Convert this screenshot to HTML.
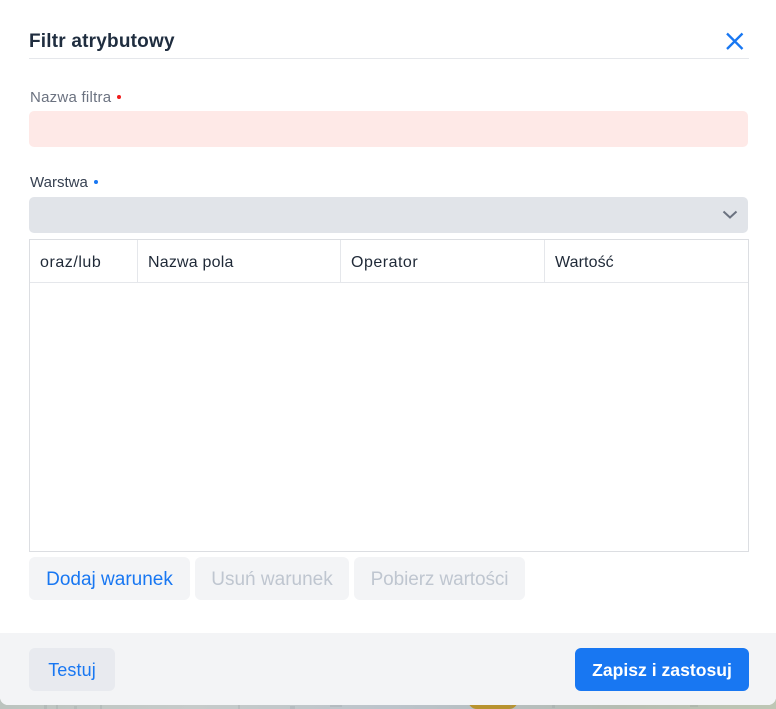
<!DOCTYPE html>
<html lang="pl">
<head>
<meta charset="utf-8">
<title>Filtr atrybutowy</title>
<style>
html,body{margin:0;padding:0;width:776px;height:709px;overflow:hidden;background:#b9c0bd;font-family:"Liberation Sans",sans-serif;}
#map{position:absolute;left:0;top:700px;width:776px;height:9px;background:linear-gradient(90deg,#bcc4bf 0,#c6cbca 25%,#bcc4cb 50%,#b7bfc2 62%,#b6bdb2 80%,#bec7b5 100%);}
#blob{position:absolute;left:468px;top:700px;width:50px;height:9px;background:#b8932f;border-radius:0 0 20px 20px;}
#marks{position:absolute;left:0;top:705px;}
#dlg{position:absolute;left:0;top:0;width:776px;height:705px;background:#fff;border-radius:0 0 8px 8px;overflow:hidden;}
.a{position:absolute;white-space:nowrap;}
.box{position:absolute;box-sizing:border-box;}
#foot{position:absolute;left:0;top:633px;width:776px;height:72px;background:#f3f4f6;}
.btn{position:absolute;top:557px;height:43px;line-height:45px;background:#f3f4f6;border-radius:6px;text-align:center;font-size:19px;color:#1877f2;white-space:nowrap;}
.dis{color:#bfc6d0;}
.th{top:253px;font-size:16px;line-height:20px;color:#1f2937;}
.dot{position:absolute;width:4px;height:4px;border-radius:50%;}
</style>
</head>
<body>
<div id="map"></div><div id="blob"></div>
<svg id="marks" width="776" height="4" viewBox="0 0 776 4"><path d="M44 0h3v4h-3zM56 0h2v4h-2zM74 1h3v3h-3zM100 0h2v4h-2zM238 0h2v4h-2zM290 1h5v3h-5zM330 0h12v2h-12zM510 0h2v4h-2zM552 0h3v3h-3zM690 0h8v2h-8z" fill="#8f9799" opacity=".22"/></svg>
<div id="dlg">
  <div class="a" style="left:29px;top:31px;font-size:19px;line-height:22px;font-weight:700;letter-spacing:.2px;color:#1f2d3f;">Filtr atrybutowy</div>
  <svg class="a" style="left:724px;top:31px" width="22" height="20" viewBox="0 0 22 20"><path d="M3 2.5L18.5 18M18.5 2.5L3 18" stroke="#1877f2" stroke-width="2.3" fill="none"/></svg>
  <div class="box" style="left:29px;top:58px;width:720px;height:1px;background:#e5e7eb;"></div>

  <div class="a" style="left:30px;top:89px;font-size:15px;line-height:18px;letter-spacing:.25px;color:#6b7280;">Nazwa filtra</div>
  <div class="dot" style="left:117px;top:95px;background:#f01c1c;"></div>
  <div class="box" style="left:29px;top:111px;width:719px;height:36px;background:#fee9e7;border-radius:5px;"></div>

  <div class="a" style="left:30px;top:174px;font-size:15px;line-height:18px;color:#374151;">Warstwa</div>
  <div class="dot" style="left:94px;top:180px;background:#1877f2;"></div>
  <div class="box" style="left:29px;top:197px;width:719px;height:36px;background:#e1e4e9;border-radius:5px;"></div>
  <svg class="a" style="left:720px;top:208px" width="20" height="14" viewBox="0 0 20 14"><path d="M3.5 3.5L10 9.5L16.5 3.5" stroke="#6b7280" stroke-width="2" fill="none"/></svg>

  <div class="box" style="left:29px;top:239px;width:720px;height:313px;border:1px solid #dcdee2;"></div>
  <div class="box" style="left:30px;top:282px;width:718px;height:1px;background:#e5e7eb;"></div>
  <div class="box" style="left:137px;top:240px;width:1px;height:42px;background:#e5e7eb;"></div>
  <div class="box" style="left:340px;top:240px;width:1px;height:42px;background:#e5e7eb;"></div>
  <div class="box" style="left:544px;top:240px;width:1px;height:42px;background:#e5e7eb;"></div>
  <div class="a th" style="left:40px;letter-spacing:.55px;">oraz/lub</div>
  <div class="a th" style="left:148px;letter-spacing:.2px;">Nazwa pola</div>
  <div class="a th" style="left:351px;letter-spacing:.5px;">Operator</div>
  <div class="a th" style="left:555px;letter-spacing:.1px;">Wartość</div>

  <div class="btn" style="left:29px;width:161px;">Dodaj warunek</div>
  <div class="btn dis" style="left:195px;width:154px;">Usuń warunek</div>
  <div class="btn dis" style="left:354px;width:171px;letter-spacing:-.1px;">Pobierz wartości</div>

  <div id="foot"></div>
  <div class="btn" style="left:29px;top:648px;width:86px;font-size:18px;letter-spacing:.1px;background:#e8eaef;">Testuj</div>
  <div class="btn" style="left:575px;top:648px;width:174px;font-size:17.6px;background:#1877f2;color:#fff;font-weight:700;">Zapisz i zastosuj</div>
</div>
</body>
</html>
